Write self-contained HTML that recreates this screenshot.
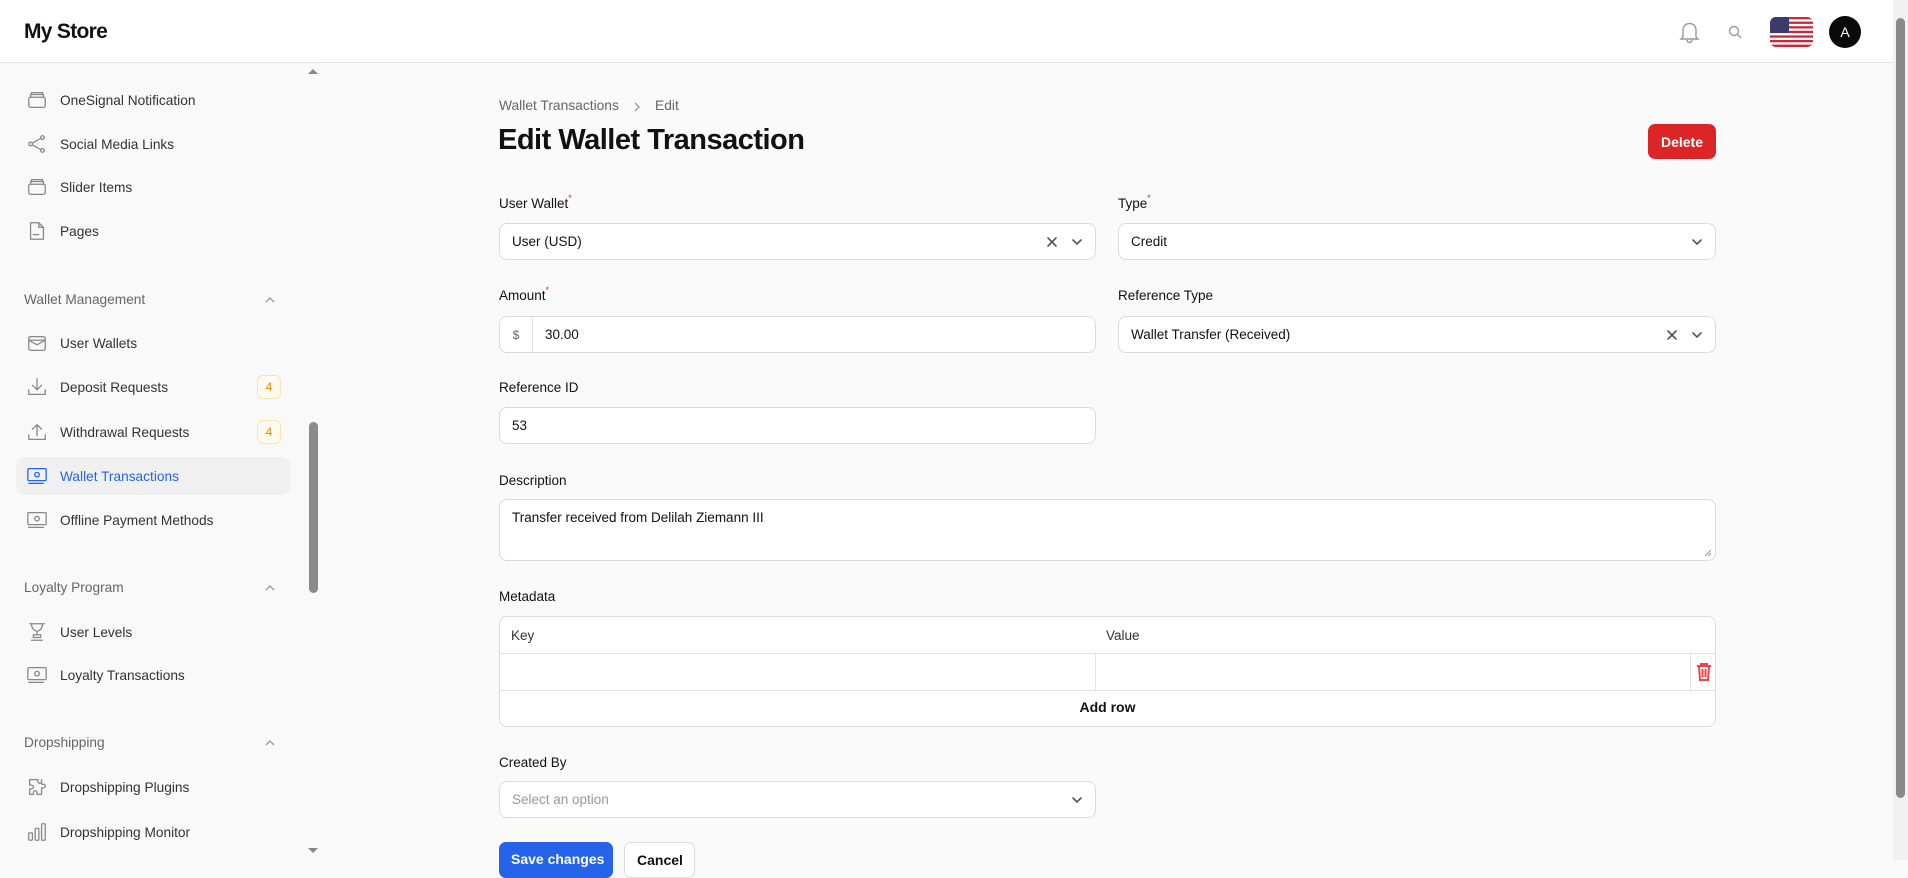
<!DOCTYPE html>
<html><head><meta charset="utf-8"><style>
*{box-sizing:border-box;margin:0;padding:0}
body{width:1908px;height:860px;overflow:hidden;background:#fafafa;font-family:"Liberation Sans",sans-serif;color:#111;position:relative}
.abs{position:absolute}
header{position:absolute;left:0;top:0;width:1893px;height:63px;background:#fff;border-bottom:1px solid #e5e5e5}
.side{position:absolute;left:0;top:63px;width:306px;height:797px;background:#f9f9f9}
.item{position:absolute;left:16px;width:274px;height:38px;border-radius:8px;display:flex;align-items:center;font-size:13.7px;color:#333}
.item svg{position:absolute;left:10px;width:22px;height:22px;fill:none;stroke:#888;stroke-width:1.4;stroke-linecap:round;stroke-linejoin:round}
.item span{position:absolute;left:44px}
.sec{position:absolute;left:24px;font-size:13.7px;color:#666}
.chev{position:absolute;left:264px;width:12px;height:12px}
.badge{position:absolute;left:241px;width:24px;height:24px;border:1px solid #fbe3b0;background:#fffaf0;border-radius:6px;color:#e08a00;font-size:12px;display:flex;align-items:center;justify-content:center}
.lbl{position:absolute;font-size:13.5px;color:#111}
.lbl i{color:#e02424;font-style:normal;font-size:9px;vertical-align:top;position:relative;top:-3px}
.inp{position:absolute;height:37px;background:#fff;border:1px solid #dcdcdc;border-radius:8px;font-size:13.5px;display:flex;align-items:center;padding-left:12px}
.ic{position:absolute;top:11px;width:14px;height:14px;fill:none;stroke:#555;stroke-width:1.6;stroke-linecap:round}
</style></head><body>
<header>
<div class="abs" style="left:24px;top:20px;font-size:21px;font-weight:bold;letter-spacing:-0.7px">My Store</div>
<svg class="abs" style="left:1679px;top:20px" width="21" height="24" viewBox="0 0 21 24" fill="none" stroke="#999" stroke-width="1.4"><path d="M4 17V10a6.5 6.5 0 0 1 13 0v7l2 2H2z"/><path d="M8 20a2.5 2.5 0 0 0 5 0"/></svg>
<svg class="abs" style="left:1728px;top:25px" width="14" height="14" viewBox="0 0 14 14" fill="none" stroke="#999" stroke-width="1.4"><circle cx="6" cy="6" r="4.5"/><path d="M9.5 9.5L13 13"/></svg>
<svg class="abs" style="left:1770px;top:17px;border-radius:6px" width="43" height="30" viewBox="0 0 43 30"><rect width="43" height="30" fill="#fff"/><g fill="#c8283c"><rect y="0" width="43" height="2.3"/><rect y="4.6" width="43" height="2.3"/><rect y="9.2" width="43" height="2.3"/><rect y="13.8" width="43" height="2.3"/><rect y="18.4" width="43" height="2.3"/><rect y="23" width="43" height="2.3"/><rect y="27.6" width="43" height="2.4"/></g><rect width="19" height="16" fill="#3c3b6e"/></svg>
<div class="abs" style="left:1829px;top:16px;width:32px;height:32px;border-radius:50%;background:#0a0a0a;color:#fff;font-size:14px;display:flex;align-items:center;justify-content:center">A</div>
</header>
<div class="abs" style="left:1893px;top:0;width:15px;height:860px;background:#f1f1f1"></div>
<div class="abs" style="left:1896px;top:18px;width:9px;height:780px;background:#8a8a8a;border-radius:5px"></div>
<div class="side">
<div class="abs" style="left:306px;top:0;width:14px;height:797px;background:#f9f9f9"></div>
<div class="abs" style="left:309px;top:359px;width:9px;height:171px;background:#8a8a8a;border-radius:5px"></div>
<div class="abs" style="left:308px;top:6px;width:0;height:0;border:5px solid transparent;border-bottom:5px solid #888;border-top:0"></div>
<div class="abs" style="left:308px;top:785px;width:0;height:0;border:5px solid transparent;border-top:5px solid #888;border-bottom:0"></div>

<div class="item" style="top:18px"><svg viewBox="0 0 24 24"><rect x="3" y="9" width="18" height="11" rx="2"/><path d="M5 9V6h14v3M6 6V4h12v2"/></svg><span>OneSignal Notification</span></div>
<div class="item" style="top:62px"><svg viewBox="0 0 24 24"><circle cx="18" cy="5" r="2"/><circle cx="5" cy="12" r="2"/><circle cx="18" cy="19" r="2"/><path d="M7 11l9-5M7 13l9 5"/></svg><span>Social Media Links</span></div>
<div class="item" style="top:105px"><svg viewBox="0 0 24 24"><rect x="3" y="9" width="18" height="11" rx="2"/><path d="M5 9V6h14v3M6 6V4h12v2"/></svg><span>Slider Items</span></div>
<div class="item" style="top:149px"><svg viewBox="0 0 24 24"><path d="M5 3h9l5 5v13H5z M14 3v5h5 M8 16h6"/></svg><span>Pages</span></div>

<div class="sec" style="top:229px">Wallet Management</div>
<svg class="chev" style="top:231px" viewBox="0 0 12 12" fill="none" stroke="#999" stroke-width="1.3"><path d="M2 8l4-4 4 4"/></svg>
<div class="item" style="top:261px"><svg viewBox="0 0 24 24"><rect x="3" y="5" width="18" height="15" rx="2"/><path d="M3 9h18M3 9l9 5 9-5"/></svg><span>User Wallets</span></div>
<div class="item" style="top:305px"><svg viewBox="0 0 24 24"><path d="M3 15v5h18v-5M12 3v12M7 10l5 5 5-5"/></svg><span>Deposit Requests</span><div class="badge" style="top:7px">4</div></div>
<div class="item" style="top:350px"><svg viewBox="0 0 24 24"><path d="M3 15v5h18v-5M12 16V4M7 9l5-5 5 5"/></svg><span>Withdrawal Requests</span><div class="badge" style="top:7px">4</div></div>
<div class="item" style="top:394px;background:#f0f0f0;color:#2563eb"><svg viewBox="0 0 24 24" style="stroke:#2563eb"><rect x="2" y="4" width="20" height="13" rx="1"/><circle cx="12" cy="10.5" r="2.5"/><path d="M3 20h16"/></svg><span>Wallet Transactions</span></div>
<div class="item" style="top:438px"><svg viewBox="0 0 24 24"><rect x="2" y="4" width="20" height="13" rx="1"/><circle cx="12" cy="10.5" r="2.5"/><path d="M3 20h16"/></svg><span>Offline Payment Methods</span></div>

<div class="sec" style="top:517px">Loyalty Program</div>
<svg class="chev" style="top:519px" viewBox="0 0 12 12" fill="none" stroke="#999" stroke-width="1.3"><path d="M2 8l4-4 4 4"/></svg>
<div class="item" style="top:550px"><svg viewBox="0 0 24 24"><path d="M4 3h16M6 3c0 5 3 8 6 8s6-3 6-8M12 11v4M8 15h8v3H8zM6 21h12"/></svg><span>User Levels</span></div>
<div class="item" style="top:593px"><svg viewBox="0 0 24 24"><rect x="2" y="4" width="20" height="13" rx="1"/><circle cx="12" cy="10.5" r="2.5"/><path d="M3 20h16"/></svg><span>Loyalty Transactions</span></div>

<div class="sec" style="top:672px">Dropshipping</div>
<svg class="chev" style="top:674px" viewBox="0 0 12 12" fill="none" stroke="#999" stroke-width="1.3"><path d="M2 8l4-4 4 4"/></svg>
<div class="item" style="top:705px"><svg viewBox="0 0 24 24"><path d="M9 4h4v2a2 2 0 0 0 4 0V4h0v5h2a2 2 0 0 1 0 4h-2v7h-5v-2a2 2 0 0 0-4 0v2H4v-6h2a2 2 0 0 0 0-4H4V4h5z"/></svg><span>Dropshipping Plugins</span></div>
<div class="item" style="top:750px"><svg viewBox="0 0 24 24"><rect x="3" y="13" width="4" height="8" rx="1"/><rect x="10" y="8" width="4" height="13" rx="1"/><rect x="17" y="3" width="4" height="18" rx="1"/></svg><span>Dropshipping Monitor</span></div>
</div>

<!-- main -->
<div class="abs" style="left:499px;top:98px;font-size:13.8px;color:#666">Wallet Transactions</div>
<svg class="abs" style="left:632px;top:101px" width="10" height="12" viewBox="0 0 10 12" fill="none" stroke="#999" stroke-width="1.3"><path d="M3 2l4 4-4 4"/></svg>
<div class="abs" style="left:655px;top:98px;font-size:13.8px;color:#666">Edit</div>
<div class="abs" style="left:498px;top:124px;font-size:29px;font-weight:bold;letter-spacing:-0.5px">Edit Wallet Transaction</div>
<div class="abs" style="left:1648px;top:124px;width:68px;height:35px;background:#dc2626;border-radius:7px;color:#fff;font-weight:bold;font-size:14px;display:flex;align-items:center;justify-content:center">Delete</div>

<div class="lbl" style="left:499px;top:196px">User Wallet<i>*</i></div>
<div class="inp" style="left:499px;top:223px;width:597px">User (USD)
<svg class="ic" style="left:545px" viewBox="0 0 14 14"><path d="M3 3l8 8M11 3l-8 8"/></svg>
<svg class="ic" style="left:570px" viewBox="0 0 14 14"><path d="M3 5l4 4 4-4"/></svg></div>
<div class="lbl" style="left:1118px;top:196px">Type<i>*</i></div>
<div class="inp" style="left:1118px;top:223px;width:598px">Credit
<svg class="ic" style="left:571px" viewBox="0 0 14 14"><path d="M3 5l4 4 4-4"/></svg></div>

<div class="lbl" style="left:499px;top:288px">Amount<i>*</i></div>
<div class="inp" style="left:499px;top:316px;width:597px;padding-left:0"><div style="width:33px;height:100%;border-right:1px solid #e2e2e2;color:#666;font-size:12px;display:flex;align-items:center;justify-content:center">$</div><span style="margin-left:12px">30.00</span></div>
<div class="lbl" style="left:1118px;top:288px">Reference Type</div>
<div class="inp" style="left:1118px;top:316px;width:598px">Wallet Transfer (Received)
<svg class="ic" style="left:546px" viewBox="0 0 14 14"><path d="M3 3l8 8M11 3l-8 8"/></svg>
<svg class="ic" style="left:571px" viewBox="0 0 14 14"><path d="M3 5l4 4 4-4"/></svg></div>

<div class="lbl" style="left:499px;top:380px">Reference ID</div>
<div class="inp" style="left:499px;top:407px;width:597px">53</div>

<div class="lbl" style="left:499px;top:473px">Description</div>
<div class="inp" style="left:499px;top:499px;width:1217px;height:62px;align-items:flex-start;padding-top:10px">Transfer received from Delilah Ziemann III
<svg class="abs" style="right:3px;bottom:3px" width="8" height="8" viewBox="0 0 8 8" stroke="#999"><path d="M1 7L7 1M4 7l3-3"/></svg></div>

<div class="lbl" style="left:499px;top:589px">Metadata</div>
<div class="abs" style="left:499px;top:616px;width:1217px;height:111px;background:#fff;border:1px solid #dcdcdc;border-radius:8px;overflow:hidden">
<div class="abs" style="left:11px;top:11px;font-size:13.5px;color:#333">Key</div>
<div class="abs" style="left:606px;top:11px;font-size:13.5px;color:#333">Value</div>
<div class="abs" style="left:0;top:36px;width:100%;height:1px;background:#e2e2e2"></div>
<div class="abs" style="left:0;top:73px;width:100%;height:1px;background:#e2e2e2"></div>
<div class="abs" style="left:595px;top:36px;width:1px;height:37px;background:#e2e2e2"></div>
<div class="abs" style="left:1190px;top:36px;width:1px;height:37px;background:#e2e2e2"></div>
<svg class="abs" style="left:1196px;top:45px" width="16" height="19" viewBox="0 0 16 19" fill="none" stroke="#ef4444" stroke-width="2"><path d="M1 4h14M5 4V2h6v2M3 4l1 14h8l1-14M6.5 7v8M9.5 7v8"/></svg>
<div class="abs" style="left:0;top:82px;width:100%;text-align:center;font-size:14px;font-weight:bold">Add row</div>
</div>

<div class="lbl" style="left:499px;top:755px">Created By</div>
<div class="inp" style="left:499px;top:781px;width:597px;color:#999">Select an option
<svg class="ic" style="left:570px" viewBox="0 0 14 14"><path d="M3 5l4 4 4-4"/></svg></div>

<div class="abs" style="left:499px;top:842px;width:114px;height:36px;background:#2563eb;border-radius:7px;color:#fff;font-weight:bold;font-size:14px;padding:9px 0 0 12px">Save changes</div>
<div class="abs" style="left:624px;top:842px;width:71px;height:36px;background:#fff;border:1px solid #dcdcdc;border-radius:7px;font-weight:bold;font-size:14px;padding:9px 0 0 12px">Cancel</div>
</body></html>
